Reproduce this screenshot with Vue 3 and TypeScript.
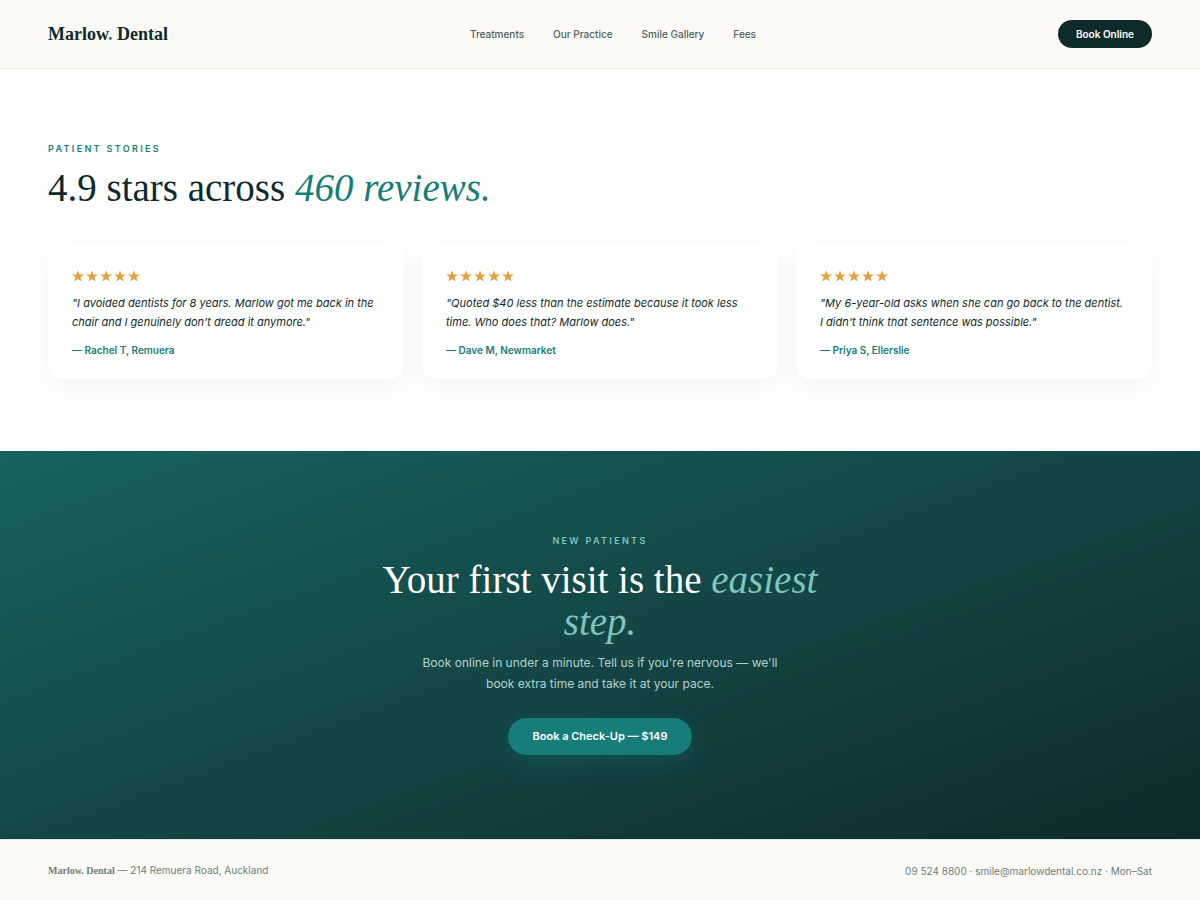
<script setup lang="ts">
interface Review {
  quote: string
  author: string
}

const links: string[] = ['Treatments', 'Our Practice', 'Smile Gallery', 'Fees']

const reviews: Review[] = [
  {
    quote: "I avoided dentists for 8 years. Marlow got me back in the chair and I genuinely don't dread it anymore.",
    author: 'Rachel T, Remuera',
  },
  {
    quote: 'Quoted $40 less than the estimate because it took less time. Who does that? Marlow does.',
    author: 'Dave M, Newmarket',
  },
  {
    quote: "My 6-year-old asks when she can go back to the dentist. I didn't think that sentence was possible.",
    author: 'Priya S, Ellerslie',
  },
]
</script>

<template>
  <div class="page">
    <header class="topbar">
      <a class="brand" href="#">Marlow<span class="dot">.</span> Dental</a>
      <nav class="nav" aria-label="Main">
        <a v-for="link in links" :key="link" href="#">{{ link }}</a>
      </nav>
      <button class="book" type="button">Book Online</button>
    </header>

    <main>
      <section class="stories">
        <p class="eyebrow">PATIENT STORIES</p>
        <h2 class="title">4.9 stars across <em>460 reviews.</em></h2>
        <div class="cards">
          <article v-for="review in reviews" :key="review.author" class="card">
            <div class="stars" role="img" aria-label="5 out of 5 stars">
              <svg v-for="n in 5" :key="n" viewBox="0 0 24 24" aria-hidden="true">
                <path d="M12 0.500l3 8.300 8.800.2-7 5.400 2.500 8.500-7.300-5-7.300 5 2.500-8.500-7-5.400 8.800-.2z" />
              </svg>
            </div>
            <p class="quote">"{{ review.quote }}"</p>
            <p class="author">— {{ review.author }}</p>
          </article>
        </div>
      </section>

      <section class="cta">
        <p class="eyebrow">NEW PATIENTS</p>
        <h2 class="title">Your first visit is the <em>easiest</em> <em>step.</em></h2>
        <p class="lead">Book online in under a minute. Tell us if you're nervous — we'll book extra time and take it at your pace.</p>
        <button class="checkup" type="button">Book a Check-Up — $149</button>
      </section>
    </main>

    <footer class="footer">
      <span><span class="footer-brand">Marlow. Dental</span> — 214 Remuera Road, Auckland</span>
      <span>09 524 8800 · smile@marlowdental.co.nz · Mon–Sat</span>
    </footer>
  </div>
</template>

<style>
body {
  margin: 0;
  background: #fbfaf6;
}
</style>

<style scoped>
.page {
  min-height: 100vh;
  display: flex;
  flex-direction: column;
  font-family: Inter, "Liberation Sans", sans-serif;
  color: #0f2a2b;
  background: #ffffff;
}

h2,
p {
  margin: 0;
}

a {
  color: inherit;
  text-decoration: none;
}

button {
  border: 0;
  border-radius: 999px;
  color: #ffffff;
  font-family: inherit;
  font-weight: 600;
  cursor: pointer;
}

.topbar {
  display: flex;
  align-items: center;
  justify-content: space-between;
  padding: 20px 48px;
  background: #fbfaf6;
  border-bottom: 1px solid #e9edea;
}

.brand {
  font-family: "Liberation Serif", serif;
  font-size: 18px;
  line-height: 24px;
  font-weight: 700;
}

.dot {
  color: #167d79;
}

.nav {
  display: flex;
  gap: 29px;
  font-size: 10px;
  font-weight: 500;
  color: #4a6361;
}

.book {
  padding: 0 18px;
  font-size: 10px;
  line-height: 28px;
  background: #0f2a2b;
}

.stories {
  padding: 71px 48px 72px;
}

.eyebrow {
  font-size: 9px;
  line-height: 17px;
  font-weight: 600;
  letter-spacing: 0.26em;
  color: #167d79;
}

.title {
  margin-top: 10px;
  font-family: "Liberation Serif", serif;
  font-size: 39px;
  line-height: 42px;
  font-weight: 400;
}

.title em {
  color: #167d79;
}

.cards {
  display: grid;
  grid-template-columns: repeat(3, 1fr);
  gap: 18px;
  margin-top: 34px;
}

.card {
  padding: 25px 24px 20px;
  border-radius: 14px;
  background: #ffffff;
  box-shadow: 0 8px 28px rgba(15, 42, 80, 0.05);
}

.stars {
  display: flex;
  gap: 2px;
  height: 16px;
  align-items: center;
}

.stars svg {
  width: 12px;
  height: 12px;
  fill: #e69f3c;
}

.quote {
  margin-top: 10px;
  font-size: 11px;
  line-height: 19px;
  font-style: italic;
}

.author {
  margin-top: 9px;
  font-size: 10px;
  line-height: 18px;
  font-weight: 600;
  color: #167d79;
}

.cta {
  display: flex;
  flex-direction: column;
  align-items: center;
  padding: 81px 48px 84px;
  text-align: center;
  color: #ffffff;
  background: linear-gradient(160deg, #17635f 0%, #0f2a2b 100%);
}

.cta .eyebrow {
  color: #7fc4bd;
}

.cta .title {
  max-width: 460px;
}

.cta .title em {
  color: #7fc4bd;
}

.lead {
  max-width: 380px;
  margin-top: 9px;
  font-size: 12px;
  line-height: 21px;
  color: #b3d1cc;
}

.checkup {
  margin-top: 24px;
  padding: 0 25px;
  font-size: 11px;
  line-height: 37px;
  background: #167d79;
  box-shadow: 0 8px 24px rgba(22, 125, 121, 0.3);
}

.footer {
  flex: 1;
  display: flex;
  align-items: center;
  justify-content: space-between;
  padding: 20px 48px;
  font-size: 10px;
  line-height: 20px;
  color: #6b7f7c;
  background: #fbfaf6;
  border-top: 1px solid #e3e9e6;
}

.footer-brand {
  font-family: "Liberation Serif", serif;
  font-weight: 700;
}
</style>
